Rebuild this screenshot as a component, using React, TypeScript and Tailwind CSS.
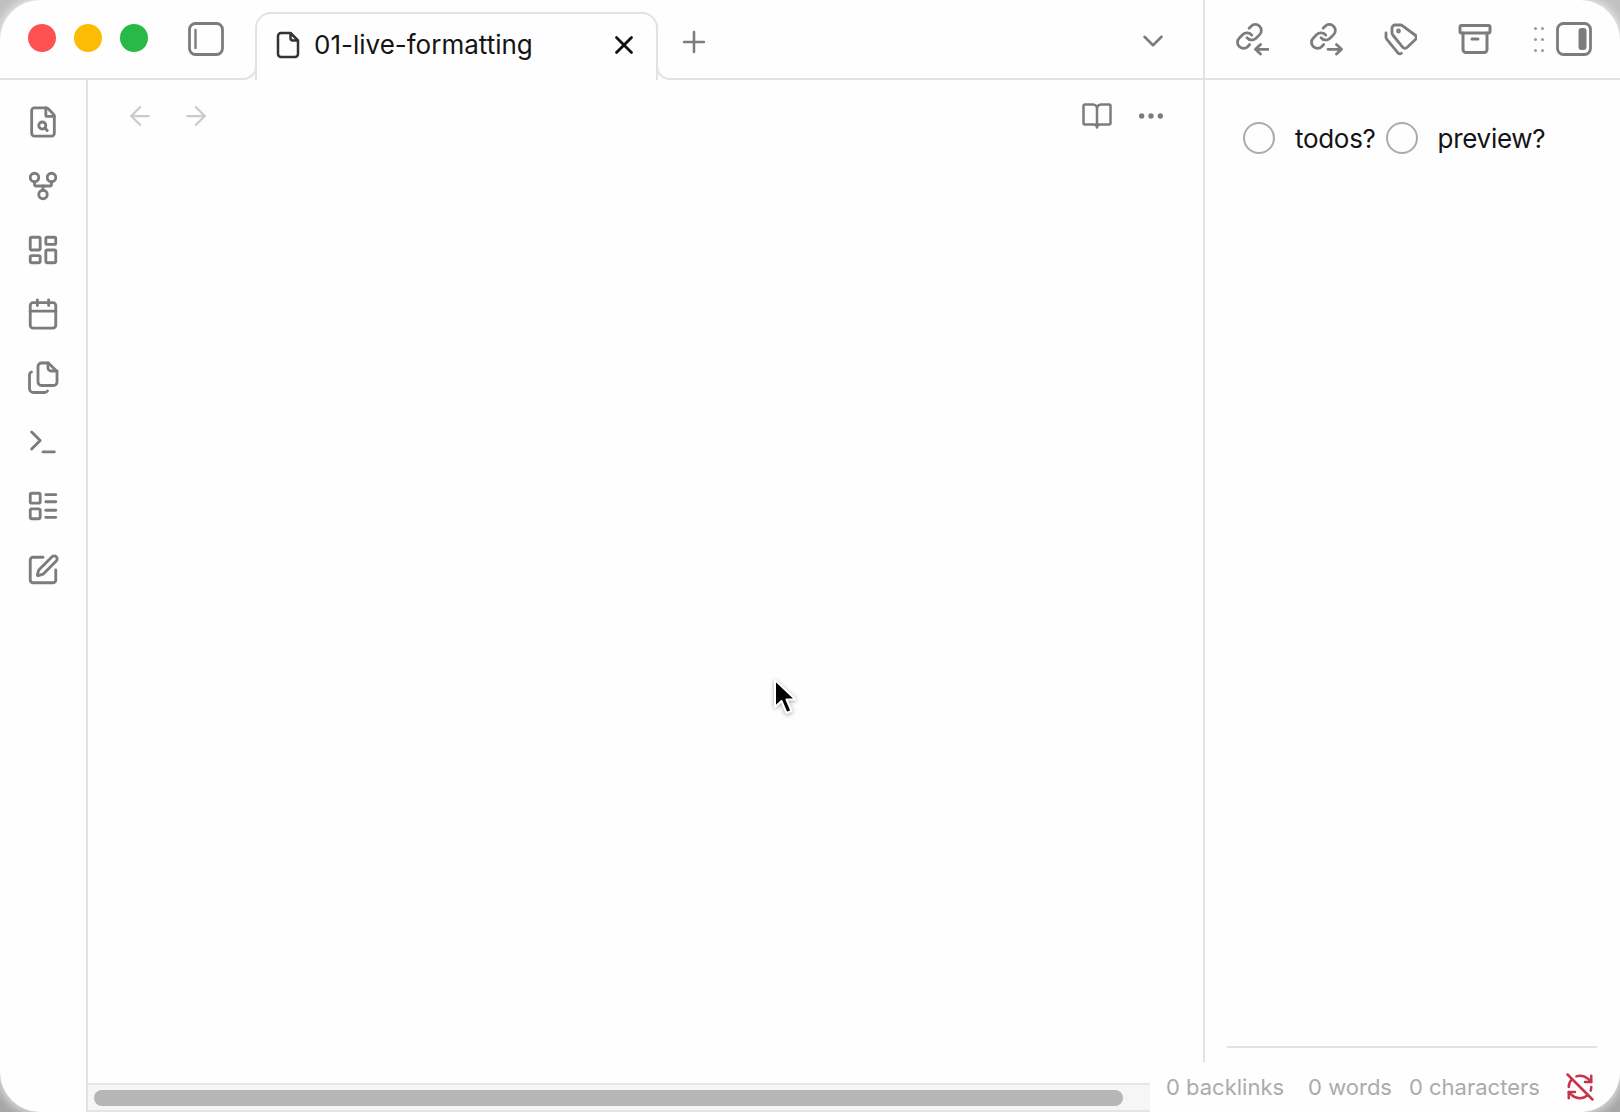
import React from 'react';
import {
  ArrowLeft, ArrowRight, Calendar, ChevronDown, Ellipsis, FileSearch, GitFork, LayoutDashboard,
  LayoutList, Plus, RefreshCwOff, SquarePen, Terminal, X, Archive,
} from 'lucide-react';

const ICON = 'text-[#7c7c7c]';

const RIBBON = [
  <FileSearch key="a" size={34} strokeWidth={2} />,
  <GitFork key="b" size={34} strokeWidth={2} />,
  <LayoutDashboard key="c" size={34} strokeWidth={2} />,
  <Calendar key="d" size={34} strokeWidth={2} />,
  <CopyDoc key="e" />,
  <Terminal key="f" size={34} strokeWidth={2} />,
  <LayoutList key="g" size={34} strokeWidth={2} />,
  <SquarePen key="h" size={34} strokeWidth={2} />,
];

function CopyDoc() {
  return (
    <svg width="34" height="34" viewBox="0 0 34 34" fill="none" stroke="currentColor" strokeWidth="2.8" strokeLinecap="round" strokeLinejoin="round">
      <path d="M22.500 2h-7a3.500 3.500 0 0 0-3.500 3.500v15.500a3.500 3.500 0 0 0 3.500 3.500h12a3.500 3.500 0 0 0 3.500-3.500V10.500z" />
      <path d="M22 2v5a3 3 0 0 0 3 3h6" />
      <path d="M5.500 11a3 3 0 0 0-2 2.500v14a4 4 0 0 0 4 4h11a3.500 3.500 0 0 0 3-1.500" />
    </svg>
  );
}

function SidePanelIcon({ side }: { side: 'left' | 'right' }) {
  return (
    <svg width="36" height="34" viewBox="0 0 36 34" fill="none" stroke="currentColor" strokeWidth="2.8">
      <rect x="1.500" y="1.500" width="33" height="31" rx="6" />
      {side === 'left'
        ? <line x1="7.500" y1="8" x2="7.500" y2="26" strokeLinecap="round" strokeWidth="2.400" />
        : <rect x="22.500" y="6" width="8" height="22" rx="3" fill="currentColor" stroke="none" />}
    </svg>
  );
}

function LinkArrow({ dir }: { dir: 'in' | 'out' }) {
  return (
    <svg width="34" height="34" viewBox="0 0 34 34" fill="none" stroke="currentColor" strokeWidth="2.800" strokeLinecap="round" strokeLinejoin="round">
      <g transform="scale(1.2)" strokeWidth="2.300">
        <path d="M10 13a5 5 0 0 0 7.540.54l3-3a5 5 0 0 0-7.070-7.070l-1.720 1.710" />
        <path d="M14 11a5 5 0 0 0-7.540-.54l-3 3a5 5 0 0 0 7.070 7.070l1.710-1.710" />
      </g>
      {dir === 'in'
        ? <path d="M33 27.300H20.500M25.500 22.500l-5 4.800 5 4.800" />
        : <path d="M19 27.300h13.500M27.500 22.500l5 4.800-5 4.800" />}
    </svg>
  );
}

function TagsIcon() {
  return (
    <svg width="34" height="34" viewBox="0 0 34 34" fill="none" stroke="currentColor" strokeWidth="2.800" strokeLinecap="round" strokeLinejoin="round">
      <path d="M9 11V6a3 3 0 0 1 3-3h5.500a3 3 0 0 1 1.800.6L32 13a3 3 0 0 1 .4 4.500L24 25.500a3 3 0 0 1-4.200-.2L9.800 13a3 3 0 0 1-.8-2z" />
      <circle cx="15.500" cy="9" r="1" />
      <path d="M3 11v4a3 3 0 0 0 .9 2.300l11 13.500a2.500 2.500 0 0 0 3.500.5" />
    </svg>
  );
}

function BookIcon() {
  return (
    <svg width="30" height="28" viewBox="0 0 30 28" fill="none" stroke="currentColor" strokeWidth="2.500" strokeLinecap="round" strokeLinejoin="round">
      <path d="M15 6.500a4 4 0 0 0-4-4H3a1.500 1.500 0 0 0-1.500 1.500v17a1.500 1.500 0 0 0 1.500 1.500h9a3 3 0 0 1 3 3 3 3 0 0 1 3-3h9a1.500 1.500 0 0 0 1.500-1.500V4A1.500 1.500 0 0 0 27 2.500h-8a4 4 0 0 0-4 4zV25" />
    </svg>
  );
}

function Radio({ label }: { label: string }) {
  return (
    <label className="flex items-center">
      <span className="w-[32px] h-[32px] rounded-full border-2 border-[#ababab] mr-[20px]" />
      <span className="mt-[2px] text-[26px] leading-[32px] tracking-[-0.3px] text-[#141414]">{label}</span>
    </label>
  );
}

function Cursor() {
  return (
    <svg className="absolute left-[770px] top-[676px]" width="32" height="42" viewBox="0 0 32 42" style={{ filter: 'drop-shadow(0 1px 2px rgba(0,0,0,.35))' }}>
      <path d="M5 4v27l6.500-6 5 12 5-2-5-11.500h9z" fill="#000" stroke="#fff" strokeWidth="2" strokeLinejoin="round" />
    </svg>
  );
}

export default function App() {
  return (
    <div className="w-[1620px] h-[1112px] bg-gradient-to-b from-[#c0c0c0] to-[#a6a6a6] overflow-hidden font-['Inter',sans-serif]">
      <div className="relative w-full h-full bg-[#fefefe] rounded-[40px] overflow-hidden flex flex-col shadow-[0_0_8px_3px_rgba(255,255,255,.6)]">
        {/* title bar */}
        <div className="h-[80px] flex shrink-0">
          <div className="w-[243px] border-b-2 border-[#e2e2e2] flex items-center pl-[28px] pb-[3px]">
            <span className="w-[28px] h-[28px] rounded-full bg-[#fe5151]" />
            <span className="w-[28px] h-[28px] rounded-full bg-[#fcbc05] ml-[18px]" />
            <span className="w-[28px] h-[28px] rounded-full bg-[#28ba49] ml-[18px]" />
            <span className={`ml-[40px] mt-[2px] ${ICON}`}><SidePanelIcon side="left" /></span>
          </div>
          <div className="w-[14px] h-[14px] self-end -mr-[2px] border-b-2 border-r-2 border-[#e2e2e2] rounded-br-[14px]" />
          <div className="w-[403px] mt-[12px] border-t-2 border-x-2 border-[#e2e2e2] rounded-t-[16px] flex items-center pl-[19px] pr-[17px] pb-[5px] bg-[#fefefe] z-10">
            <svg className="text-[#333] shrink-0" width="24" height="28" viewBox="0 0 24 28" fill="none" stroke="currentColor" strokeWidth="2.500" strokeLinejoin="round">
              <path d="M14.500 2H5a3 3 0 0 0-3 3v18a3 3 0 0 0 3 3h14a3 3 0 0 0 3-3V9.500z" />
              <path d="M14.500 2v5a2.500 2.500 0 0 0 2.500 2.500h5" />
            </svg>
            <span className="ml-[14px] text-[26px] leading-[32px] text-[#141414] flex-1">01-live-formatting</span>
            <X size={30} strokeWidth={2.2} className="text-[#111]" />
          </div>
          <div className="w-[14px] h-[14px] self-end -ml-[2px] border-b-2 border-l-2 border-[#e2e2e2] rounded-bl-[14px]" />
          <div className="flex-1 border-b-2 border-[#e2e2e2] flex items-center pt-[5px] pl-[7px] pr-[33px] justify-between">
            <Plus size={34} strokeWidth={1.800} className={ICON} />
            <ChevronDown size={34} strokeWidth={1.800} className={`mb-[2px] ${ICON}`} />
          </div>
          <div className={`w-[417px] border-b-2 border-l-2 border-[#e2e2e2] flex items-center pl-[30px] ${ICON}`}>
            <LinkArrow dir="in" />
            <span className="ml-[40px]"><LinkArrow dir="out" /></span>
            <span className="ml-[40px]"><TagsIcon /></span>
            <span className="ml-[40px]"><Archive size={36} strokeWidth={2} /></span>
            <div className="ml-[41px] grid grid-cols-2 gap-x-[4px] gap-y-[8px]">
              {[0, 1, 2, 3, 4, 5].map((i) => <span key={i} className="w-[3px] h-[3px] rounded-full bg-[#9a9a9a]" />)}
            </div>
            <span className="ml-[12px]"><SidePanelIcon side="right" /></span>
          </div>
        </div>

        <div className="flex-1 flex min-h-0">
          {/* ribbon */}
          <div className={`w-[88px] shrink-0 border-r-2 border-[#e2e2e2] flex flex-col items-center pt-[25px] gap-[30px] ${ICON}`}>
            {RIBBON}
          </div>

          {/* main pane */}
          <div className="flex-1 flex flex-col min-w-0">
            <div className="flex items-center h-[72px] pl-[37px] pr-[36px]">
              <ArrowLeft size={30} strokeWidth={1.800} className="text-[#cacaca]" />
              <ArrowRight size={30} strokeWidth={1.800} className="text-[#cacaca] ml-[26px]" />
              <span className={`ml-auto ${ICON}`}><BookIcon /></span>
              <Ellipsis size={32} strokeWidth={2} className={`ml-[23px] ${ICON}`} />
            </div>
            <div className="flex-1" />
            <div className="h-[29px] border-y-2 border-[#e5e5e5] bg-[#f6f6f6] flex items-center pl-[6px]">
              <div className="w-[1029px] h-[16px] rounded-full bg-[#b6b6b6]" />
            </div>
          </div>

          {/* right pane */}
          <div className="w-[417px] shrink-0 border-l-2 border-[#e2e2e2] flex flex-col">
            <div className="flex items-center gap-[10px] pl-[38px] pt-[41px]">
              <Radio label="todos?" />
              <Radio label="preview?" />
            </div>
            <div className="mt-auto mb-[64px] ml-[22px] mr-[23px] h-[2px] bg-[#e2e2e2]" />
          </div>
        </div>

        {/* status bar sits over the corner */}
        <div className="absolute right-0 bottom-0 w-[470px] h-[50px] bg-[#fefefe] flex items-center pl-[16px] text-[22px] text-[#ababab]">
          <span>0 backlinks</span>
          <span className="ml-[24px]">0 words</span>
          <span className="ml-[17px]">0 characters</span>
          <RefreshCwOff size={30} strokeWidth={2} className="text-[#c8324b] ml-[25px]" />
        </div>

        <Cursor />
      </div>
    </div>
  );
}
